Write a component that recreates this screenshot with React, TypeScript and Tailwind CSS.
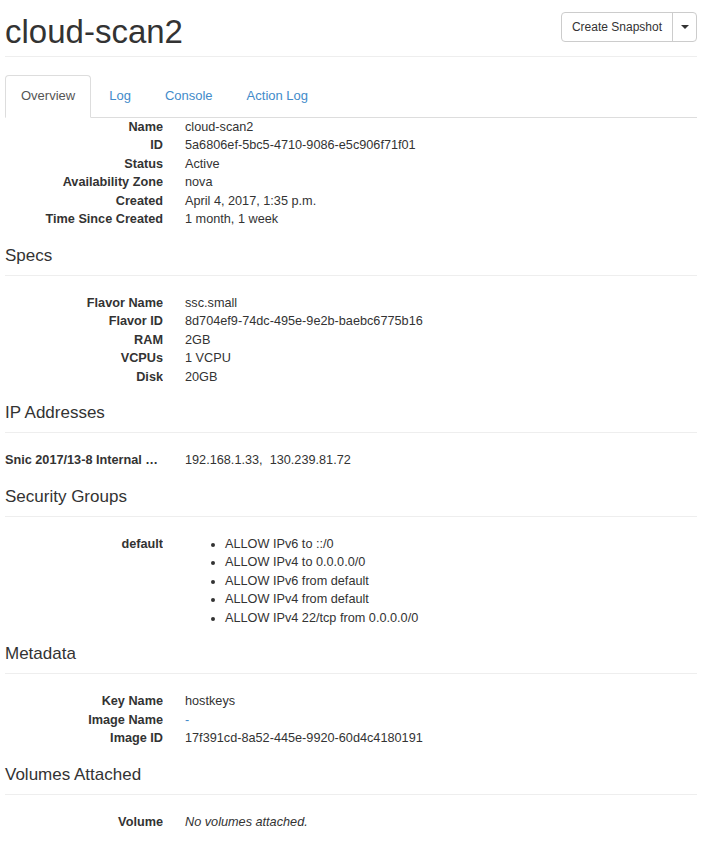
import React from "react";

type Row = [string, React.ReactNode];

function DL({ rows }: { rows: Row[] }) {
  return (
    <dl className="m-0">
      {rows.map(([k, v], i) => (
        <div key={i} className="flex leading-[18.5px]">
          <dt className="w-[158px] shrink-0 text-right font-bold truncate">{k}</dt>
          <dd className="ml-[22px] m-0">{v}</dd>
        </div>
      ))}
    </dl>
  );
}

function Section({ title, children }: { title: string; children: React.ReactNode }) {
  return (
    <section className="mt-[17px]">
      <h4 className="m-0 text-[17px] leading-[20px] font-normal text-[#333]">{title}</h4>
      <div className="mt-[9px] mb-[18px] h-px bg-[#eeeeee]" />
      {children}
    </section>
  );
}

export default function App() {
  const rules = [
    "ALLOW IPv6 to ::/0",
    "ALLOW IPv4 to 0.0.0.0/0",
    "ALLOW IPv6 from default",
    "ALLOW IPv4 from default",
    "ALLOW IPv4 22/tcp from 0.0.0.0/0",
  ];
  return (
    <div
      className="bg-white text-[#333] text-[12.7px] pl-[5px] pr-[13px] min-h-[845px]"
      style={{ fontFamily: '"Liberation Sans", Arial, sans-serif' }}
    >
      <div className="flex justify-between items-start h-[56px] border-b border-[#eeeeee] box-content">
        <h1 className="m-0 mt-[14px] text-[33px] leading-[36px] font-normal text-[#333]">cloud-scan2</h1>
        <div className="mt-[12px] flex h-[30px] border border-[#cccccc] rounded-[4px] text-[12px] text-[#333]">
          <div className="px-[10px] flex items-center">Create Snapshot</div>
          <div className="w-[24px] border-l border-[#cccccc] flex items-center justify-center">
            <svg width="8" height="4" viewBox="0 0 8 4">
              <path d="M0 0 L8 0 L4 4 Z" fill="#333" />
            </svg>
          </div>
        </div>
      </div>

      <ul className="mt-[18px] flex border-b border-[#dddddd] list-none p-0 m-0 text-[13px]">
        <li className="-mb-px mr-[2px]">
          <div className="px-[15px] py-[11px] leading-[18.5px] border border-[#dddddd] border-b-transparent rounded-t-[4px] bg-white text-[#555]">
            Overview
          </div>
        </li>
        {["Log", "Console", "Action Log"].map((t) => (
          <li key={t} className="-mb-px mr-[2px]">
            <div className="px-[15px] py-[11px] leading-[18.5px] border border-transparent text-[#428bca]">{t}</div>
          </li>
        ))}
      </ul>

      <DL
        rows={[
          ["Name", "cloud-scan2"],
          ["ID", "5a6806ef-5bc5-4710-9086-e5c906f71f01"],
          ["Status", "Active"],
          ["Availability Zone", "nova"],
          ["Created", "April 4, 2017, 1:35 p.m."],
          ["Time Since Created", "1 month, 1 week"],
        ]}
      />

      <Section title="Specs">
        <DL
          rows={[
            ["Flavor Name", "ssc.small"],
            ["Flavor ID", "8d704ef9-74dc-495e-9e2b-baebc6775b16"],
            ["RAM", "2GB"],
            ["VCPUs", "1 VCPU"],
            ["Disk", "20GB"],
          ]}
        />
      </Section>

      <Section title="IP Addresses">
        <DL rows={[["Snic 2017/13-8 Internal Network", "192.168.1.33,\u00a0\u00a0130.239.81.72"]]} />
      </Section>

      <Section title="Security Groups">
        <DL
          rows={[
            [
              "default",
              <ul className="list-disc pl-[40px] m-0">
                {rules.map((r) => (
                  <li key={r}>{r}</li>
                ))}
              </ul>,
            ],
          ]}
        />
      </Section>

      <Section title="Metadata">
        <DL
          rows={[
            ["Key Name", "hostkeys"],
            ["Image Name", <span className="text-[#428bca]">-</span>],
            ["Image ID", "17f391cd-8a52-445e-9920-60d4c4180191"],
          ]}
        />
      </Section>

      <Section title="Volumes Attached">
        <DL rows={[["Volume", <em>No volumes attached.</em>]]} />
      </Section>
    </div>
  );
}
